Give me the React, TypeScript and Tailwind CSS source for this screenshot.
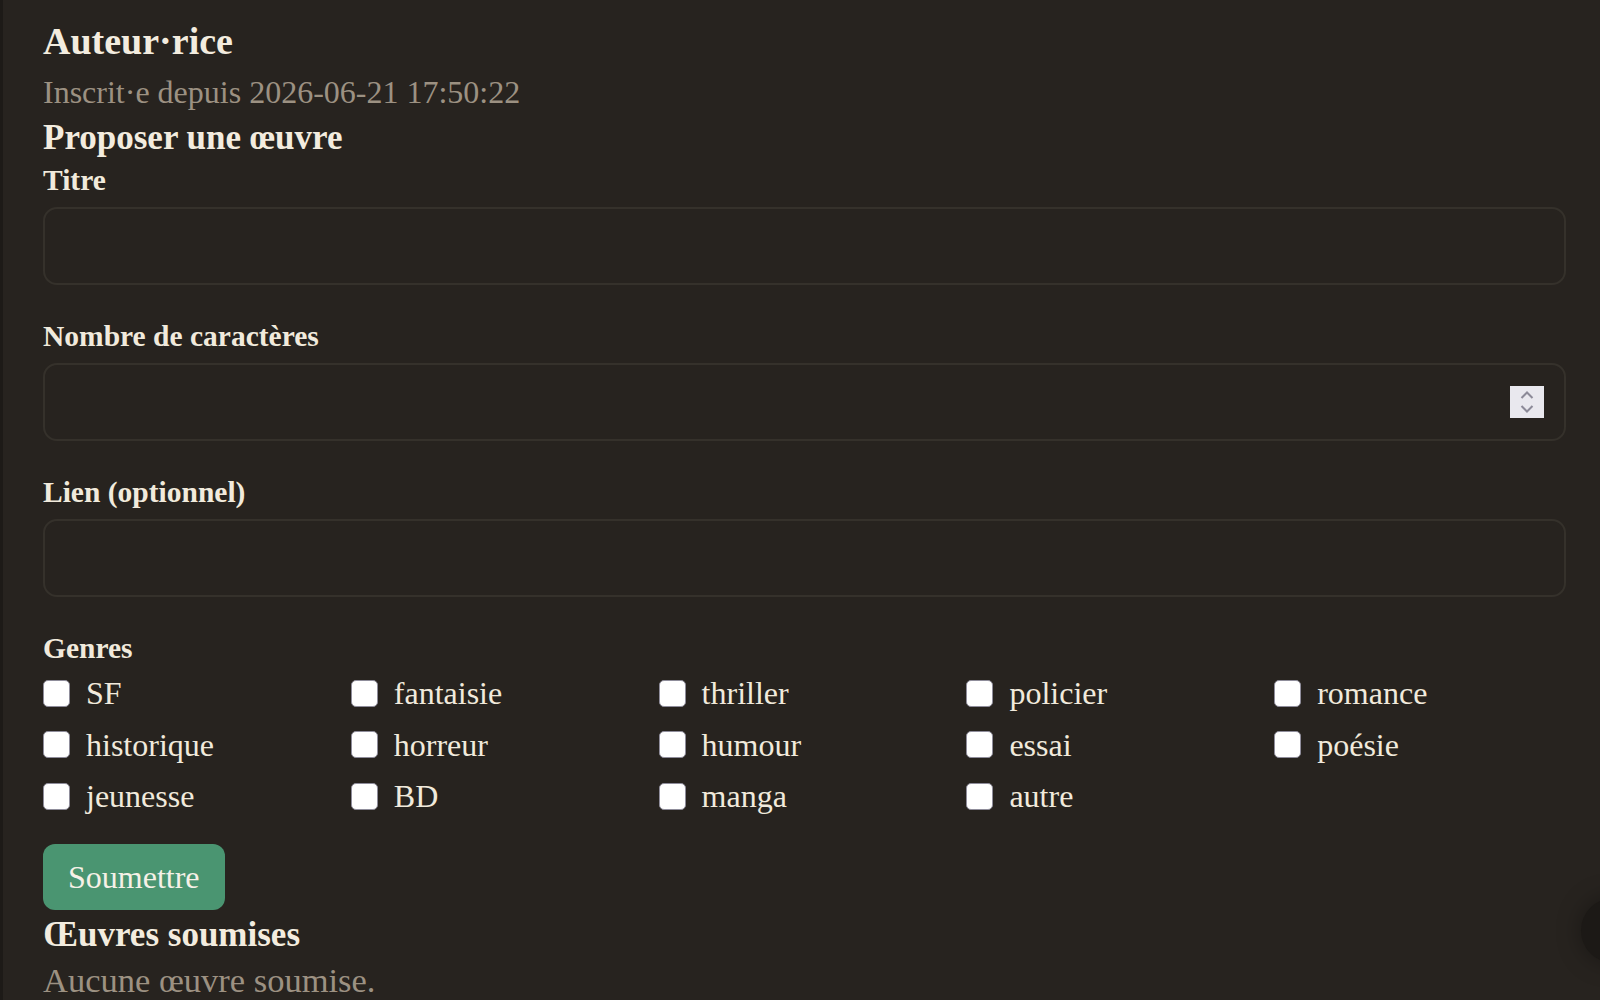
import { useState } from "react";

const GENRES = [
  "SF",
  "fantaisie",
  "thriller",
  "policier",
  "romance",
  "historique",
  "horreur",
  "humour",
  "essai",
  "poésie",
  "jeunesse",
  "BD",
  "manga",
  "autre",
];

const serif = { fontFamily: '"Liberation Serif", "Times New Roman", serif' };

// champ texte avec son label, même rythme pour chaque bloc
const Field = ({ label, children }: { label: string; children: React.ReactNode }) => (
  <label className="mb-[33px] block">
    <span className="block text-[29.5px] leading-[36px] font-bold text-[#f1eadc]">{label}</span>
    <div className="mt-[9px]">{children}</div>
  </label>
);

const inputCls =
  "block h-[78px] w-full rounded-[14px] border-2 border-[#35312b] bg-transparent px-5 text-[32px] text-[#f1eadc] outline-none";

// petites flèches du champ numérique
const Spinner = () => (
  <div className="absolute top-1/2 right-[22px] flex h-[32px] w-[34px] -translate-y-1/2 flex-col items-center justify-center gap-[6px] bg-[#e9e8ee]">
    <svg width="14" height="8" viewBox="0 0 14 8" fill="none">
      <path d="M1.5 7L7 1.5L12.5 7" stroke="#8c8a98" strokeWidth="2" />
    </svg>
    <svg width="14" height="8" viewBox="0 0 14 8" fill="none">
      <path d="M1.5 1L7 6.5L12.5 1" stroke="#8c8a98" strokeWidth="2" />
    </svg>
  </div>
);

export default function App() {
  const [checked, setChecked] = useState<string[]>([]);

  const toggle = (g: string) =>
    setChecked((prev) => (prev.includes(g) ? prev.filter((x) => x !== g) : [...prev, g]));

  return (
    <div className="relative min-h-screen overflow-hidden bg-[#27231f]" style={serif}>
      <div className="min-h-screen border-l-[3px] border-[#1d1a17]">
        <div className="pt-[17px] pr-[34px] pl-[40px]">
          <h2 className="text-[38px] leading-[48px] font-bold text-[#f3ecdf]">Auteur·rice</h2>
          <p className="mt-[7px] text-[32px] leading-[40px] text-[#9c9182]">
            Inscrit·e depuis 2026-06-21 17:50:22
          </p>

          <h3 className="mt-[6px] text-[35px] leading-[40px] font-bold text-[#f3ecdf]">
            Proposer une œuvre
          </h3>

          <form className="mt-[4px]" onSubmit={(e) => e.preventDefault()}>
            <Field label="Titre">
              <input type="text" className={inputCls} />
            </Field>

            <Field label="Nombre de caractères">
              <div className="relative">
                <input type="text" inputMode="numeric" className={inputCls} />
                <Spinner />
              </div>
            </Field>

            <Field label="Lien (optionnel)">
              <input type="text" className={inputCls} />
            </Field>

            <span className="block text-[29.5px] leading-[36px] font-bold text-[#f1eadc]">Genres</span>
            <div className="mt-[5px] grid grid-cols-5 gap-x-4 gap-y-[7.5px]">
              {GENRES.map((g) => (
                <label key={g} className="flex h-[44px] items-center gap-4">
                  <input
                    type="checkbox"
                    checked={checked.includes(g)}
                    onChange={() => toggle(g)}
                    className="h-[27px] w-[27px] shrink-0 appearance-none rounded-[5px] border border-[#8f8d9b] bg-white checked:bg-[#4a9571]"
                  />
                  <span className="text-[32px] leading-[40px] text-[#f1eadc]">{g}</span>
                </label>
              ))}
            </div>

            <button
              type="submit"
              className="mt-[26px] h-[66px] rounded-[12px] bg-[#4a9571] px-[25px] text-[32px] text-[#f6f1e7]"
            >
              Soumettre
            </button>
          </form>

          <h3 className="mt-[5px] text-[35px] leading-[40px] font-bold text-[#f3ecdf]">
            Œuvres soumises
          </h3>
          <p className="mt-[5px] text-[34.5px] leading-[40px] text-[#9c9182]">Aucune œuvre soumise.</p>
        </div>
      </div>

      {/* bouton flottant à moitié hors écran */}
      <button
        aria-label="menu"
        className="absolute top-[898px] right-[-46px] h-[65px] w-[65px] rounded-full bg-[#1c1916] shadow-[0_0_24px_rgba(0,0,0,0.35)]"
      />
    </div>
  );
}
